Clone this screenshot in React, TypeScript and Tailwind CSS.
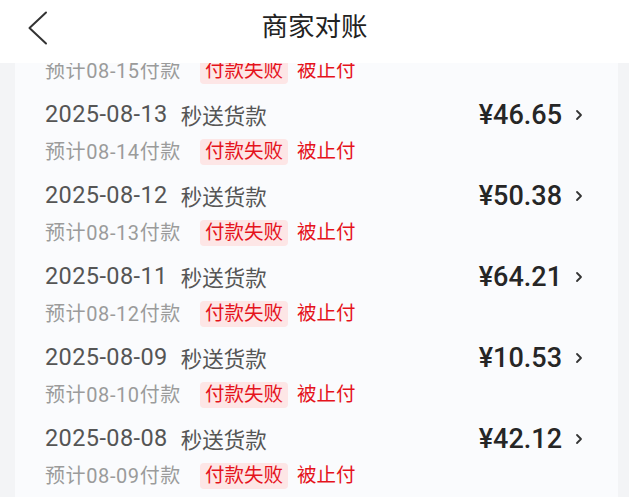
import React from "react";

const rows = [
  { date: "2025-08-14", due: "预计08-15付款", amount: "¥38.20" },
  { date: "2025-08-13", due: "预计08-14付款", amount: "¥46.65" },
  { date: "2025-08-12", due: "预计08-13付款", amount: "¥50.38" },
  { date: "2025-08-11", due: "预计08-12付款", amount: "¥64.21" },
  { date: "2025-08-09", due: "预计08-10付款", amount: "¥10.53" },
  { date: "2025-08-08", due: "预计08-09付款", amount: "¥42.12" },
];

const font = "Roboto, 'Noto Sans CJK SC', sans-serif";

export default function App() {
  return (
    <div
      className="w-[629px] h-[497px] flex flex-col overflow-hidden bg-[#f3f4f6]"
      style={{ fontFamily: font }}
    >
      <div className="relative z-10 h-[63px] shrink-0 bg-white flex items-center justify-center pb-[12px]">
        <svg
          className="absolute left-[26px] top-[11px]"
          width="24"
          height="34"
          viewBox="0 0 24 34"
          fill="none"
        >
          <path d="M20 1.5 L3.5 17 L20 32.5" stroke="#333" strokeWidth="2" strokeLinecap="round" strokeLinejoin="round" />
        </svg>
        <span className="text-[26.5px] text-[#222] leading-none" style={{ fontFamily: "'Noto Sans CJK SC', sans-serif" }}>
          商家对账
        </span>
      </div>
      <div className="flex-1 overflow-hidden pl-[15px] pr-[11px]">
        <div className="-mt-[52px] bg-[#fafbfd] flex flex-col">
          {rows.map((r) => (
            <div key={r.date} className="h-[81px] pt-[8px] pl-[30px] pr-[34px] flex flex-col gap-[8px]">
              <div className="h-[30px] flex items-center">
                <span className="text-[23.5px] tracking-[0.4px] text-[#555] leading-none">{r.date}</span>
                <span className="ml-[13px] text-[21.5px] text-[#555] leading-none" style={{ fontFamily: "'Noto Sans CJK SC', sans-serif" }}>
                  秒送货款
                </span>
                <span className="ml-auto text-[27px] font-medium text-[#262626] leading-none">{r.amount}</span>
                <svg className="ml-[12px]" width="10" height="14" viewBox="0 0 10 14" fill="none">
                  <path d="M3 3 L7 7 L3 11" stroke="#333" strokeWidth="1.8" strokeLinecap="round" strokeLinejoin="round" />
                </svg>
              </div>
              <div className="h-[28px] flex items-center">
                <span className="text-[20px] tracking-[0.6px] text-[#9b9b9b] leading-none">{r.due}</span>
                <span className="ml-[19px] px-[5px] h-[26px] flex items-center rounded-[4px] bg-[#fde6e6] text-[19.5px] text-[#e5131c] leading-none">
                  付款失败
                </span>
                <span className="ml-[9px] text-[19.5px] text-[#e5131c] leading-none">被止付</span>
              </div>
            </div>
          ))}
        </div>
      </div>
    </div>
  );
}
